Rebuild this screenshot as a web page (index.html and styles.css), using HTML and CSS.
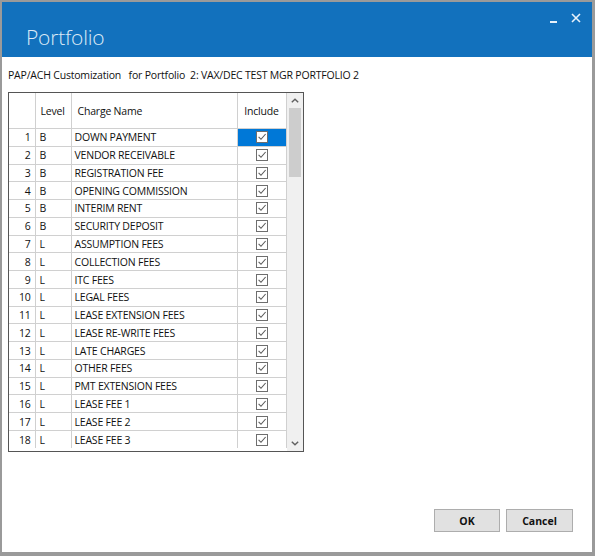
FILE: index.html
```html
<!DOCTYPE html>
<html>
<head>
<meta charset="utf-8">
<link rel="stylesheet" href="styles.css">
</head>
<body>
<div class="window">
  <div class="titlebar">
    <span class="title">Portfolio</span>
    <div class="controls">
      <span class="min"></span>
      <svg class="close" width="10" height="10" viewBox="0 0 10 10"><path d="M1 1 L9 9 M9 1 L1 9" stroke="#e8f1fa" stroke-width="1.6"/></svg>
    </div>
  </div>
  <div class="content">
    <div class="subtitle">PAP/ACH Customization&nbsp;&nbsp; for Portfolio&nbsp; 2: VAX/DEC TEST MGR PORTFOLIO 2</div>
    <div class="grid">
      <table class="table">
        <colgroup><col class="c-num"><col class="c-lvl"><col class="c-name"><col class="c-inc"></colgroup>
        <thead>
          <tr class="head"><th></th><th class="lvl">Level</th><th class="name">Charge Name</th><th class="inc">Include</th></tr>
        </thead>
        <tbody id="rows"></tbody>
      </table>
      <div class="scrollbar">
        <div class="arrow"><svg width="8" height="5" viewBox="0 0 8 5"><path d="M0.8 4.2 L4 1.2 L7.2 4.2" fill="none" stroke="#606060" stroke-width="1.4"/></svg></div>
        <div class="track"><div class="thumb"></div></div>
        <div class="arrow"><svg width="8" height="5" viewBox="0 0 8 5"><path d="M0.8 0.8 L4 3.8 L7.2 0.8" fill="none" stroke="#606060" stroke-width="1.4"/></svg></div>
      </div>
    </div>
    <div class="buttons">
      <button class="btn">OK</button>
      <button class="btn">Cancel</button>
    </div>
  </div>
</div>
<script>
var data = [
 ["B","DOWN PAYMENT"],["B","VENDOR RECEIVABLE"],["B","REGISTRATION FEE"],["B","OPENING COMMISSION"],
 ["B","INTERIM RENT"],["B","SECURITY DEPOSIT"],["L","ASSUMPTION FEES"],["L","COLLECTION FEES"],
 ["L","ITC FEES"],["L","LEGAL FEES"],["L","LEASE EXTENSION FEES"],["L","LEASE RE-WRITE FEES"],
 ["L","LATE CHARGES"],["L","OTHER FEES"],["L","PMT EXTENSION FEES"],["L","LEASE FEE 1"],
 ["L","LEASE FEE 2"],["L","LEASE FEE 3"]
];
var box = '<svg width="12" height="12" viewBox="0 0 12 12"><rect x="0.5" y="0.5" width="11" height="11" fill="#fff" stroke="#6e6e6e"/><path d="M2.6 5.8 L5 8.3 L9.6 3" fill="none" stroke="#5a5a5a" stroke-width="1.1"/></svg>';
var html = "";
data.forEach(function(r, i){
  html += '<tr><td class="num">' + (i+1) + '</td><td class="lvl">' + r[0] + '</td><td class="name">' + r[1] + '</td><td class="inc' + (i===0 ? ' sel' : '') + '">' + box + '</td></tr>';
});
document.getElementById("rows").innerHTML = html;
</script>
</body>
</html>
```
FILE: styles.css
```css
html, body {
  margin: 0;
  padding: 0;
}
body {
  width: 595px;
  height: 556px;
  background: #9a9a9a;
  box-sizing: border-box;
  padding: 2px 3px 4px 2px;
  font-family: "Open Sans", "Noto Sans", sans-serif;
  overflow: hidden;
}
.window {
  width: 590px;
  height: 550px;
  background: #fff;
  display: flex;
  flex-direction: column;
}
.titlebar {
  height: 55px;
  background: #1271bd;
  display: flex;
  align-items: flex-start;
  justify-content: space-between;
  flex: none;
}
.title {
  font-family: "Open Sans", sans-serif;
  font-weight: 300;
  font-size: 21px;
  color: #dbe9f6;
  margin: 21px 0 0 24px;
  letter-spacing: -0.2px;
}
.controls {
  display: flex;
  align-items: center;
  gap: 14px;
  margin: 11px 11px 0 0;
}
.min {
  display: block;
  width: 7px;
  height: 2px;
  background: #e8f1fa;
  margin-top: 8px;
}
.content {
  flex: 1;
  display: flex;
  flex-direction: column;
  padding: 0 19px 20px 6px;
}
.subtitle {
  font-size: 10.5px;
  color: #111;
  margin: 11px 0 0 0;
  height: 24px;
  letter-spacing: -0.2px;
}
.grid {
  width: 294px;
  height: 358px;
  border: 1px solid #555;
  display: flex;
  font-size: 10.5px;
  color: #111;
  letter-spacing: -0.2px;
}
.table {
  border-collapse: collapse;
  table-layout: fixed;
  width: 277px;
  height: 355px;
}
.c-num { width: 26px; }
.c-lvl { width: 36px; }
.c-name { width: 166px; }
.c-inc { width: 49px; }
.table th, .table td {
  border: 1px solid #d0d0d0;
  padding: 0;
  white-space: nowrap;
  overflow: hidden;
}
.table tr:first-child th { border-top: none; }
.table th:first-child, .table td:first-child { border-left: none; }
.table tr:last-child td { border-bottom: none; }
.head th {
  height: 35px;
  font-weight: normal;
  text-align: left;
  vertical-align: middle;
}
.head th.lvl { padding-left: 5px; }
.head th.name { padding-left: 6px; }
.head th.inc { text-align: center; }
.table td { height: 16.6px; line-height: 14px; }
.table td.num { text-align: right; padding-right: 4px; }
.table td.lvl { padding-left: 4px; }
.table td.name { padding-left: 3px; }
.table td.inc { text-align: center; }
.table td.inc svg { display: block; margin: 0 auto; }
.table td.sel { background: #0078d7; }
.scrollbar {
  width: 17px;
  background: #f0f0f0;
  display: flex;
  flex-direction: column;
}
.arrow {
  height: 15px;
  display: flex;
  align-items: center;
  justify-content: center;
}
.track {
  flex: 1;
  padding: 0 2px;
}
.thumb {
  height: 69px;
  background: #cdcdcd;
}
.buttons {
  margin-top: auto;
  display: flex;
  justify-content: flex-end;
  gap: 6px;
}
.btn {
  height: 23px;
  background: #e1e1e1;
  border: 1px solid #adadad;
  font-family: "Open Sans", sans-serif;
  font-weight: bold;
  font-size: 10.5px;
  color: #111;
  padding: 0;
}
.btn:first-child { width: 66px; }
.btn:last-child { width: 67px; }
```
